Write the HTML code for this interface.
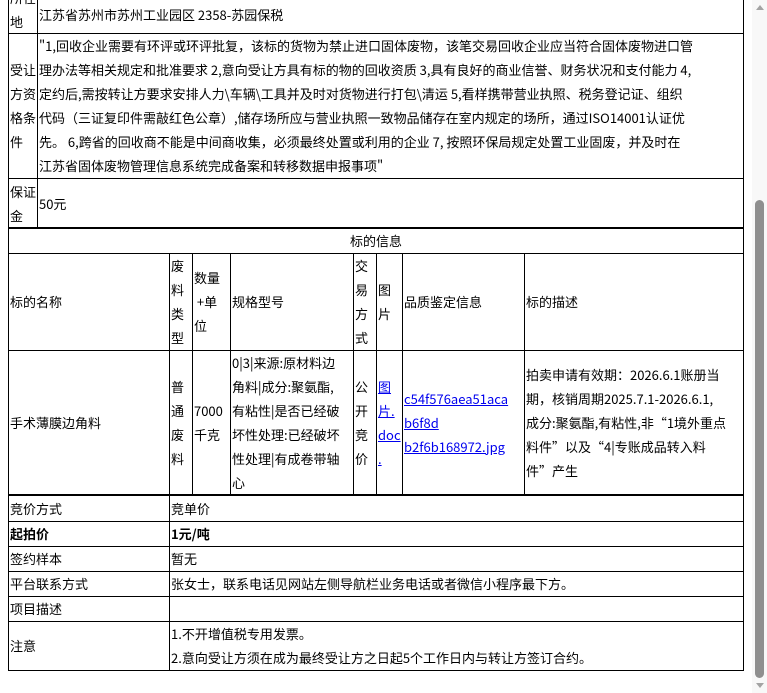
<!DOCTYPE html>
<html lang="zh-CN"><head><meta charset="utf-8">
<style>
*{margin:0;padding:0;box-sizing:border-box}
html,body{width:767px;height:693px;overflow:hidden;background:#fff}
body{position:relative;font-family:"Noto Sans CJK SC","Liberation Sans",sans-serif;font-size:13px;color:#000;line-height:24px}
.c{position:absolute;border:1px solid #000;display:flex;align-items:center;padding:0 1px;overflow:hidden}
.t{white-space:nowrap}
a{color:#0000ee;text-decoration:underline}
.thick{position:absolute;background:#000;height:2px}
</style></head><body>

<!-- top table -->
<div class="c" style="left:8px;top:-20px;width:30px;height:54px"><div class="t" style="margin-top:6px">所在<br>地</div></div>
<div class="c" style="left:37px;top:-20px;width:707px;height:54px"><div class="t" style="margin-top:16px">江苏省苏州市苏州工业园区 2358-苏园保税</div></div>

<div class="c" style="left:8px;top:33px;width:30px;height:146px"><div class="t">受让<br>方资<br>格条<br>件</div></div>
<div class="c" style="left:37px;top:33px;width:707px;height:146px"><div class="t">"1,回收企业需要有环评或环评批复，该标的货物为禁止进口固体废物，该笔交易回收企业应当符合固体废物进口管<br>理办法等相关规定和批准要求 2,意向受让方具有标的物的回收资质 3,具有良好的商业信誉、财务状况和支付能力 4,<br>定约后,需按转让方要求安排人力\车辆\工具并及时对货物进行打包\清运 5,看样携带营业执照、税务登记证、组织<br>代码（三证复印件需敲红色公章）,储存场所应与营业执照一致物品储存在室内规定的场所，通过ISO14001认证优<br>先。 6,跨省的回收商不能是中间商收集，必须最终处置或利用的企业 7, 按照环保局规定处置工业固废，并及时在<br>江苏省固体废物管理信息系统完成备案和转移数据申报事项"</div></div>

<div class="c" style="left:8px;top:178px;width:30px;height:51px"><div class="t">保证<br>金</div></div>
<div class="c" style="left:37px;top:178px;width:707px;height:51px"><div class="t">50元</div></div>
<div class="thick" style="left:8px;top:227px;width:736px"></div>

<div class="c" style="left:8px;top:228px;width:736px;height:26px;justify-content:center"><div class="t">标的信息</div></div>

<!-- header row -->
<div class="c" style="left:8px;top:253px;width:162px;height:98px"><div class="t">标的名称</div></div>
<div class="c" style="left:169px;top:253px;width:24px;height:98px"><div class="t">废<br>料<br>类<br>型</div></div>
<div class="c" style="left:192px;top:253px;width:39px;height:98px"><div class="t">数量<br>&nbsp;+单<br>位</div></div>
<div class="c" style="left:230px;top:253px;width:124px;height:98px"><div class="t">规格型号</div></div>
<div class="c" style="left:353px;top:253px;width:24px;height:98px"><div class="t">交<br>易<br>方<br>式</div></div>
<div class="c" style="left:376px;top:253px;width:27px;height:98px"><div class="t">图<br>片</div></div>
<div class="c" style="left:402px;top:253px;width:123px;height:98px"><div class="t">品质鉴定信息</div></div>
<div class="c" style="left:524px;top:253px;width:220px;height:98px"><div class="t">标的描述</div></div>

<!-- data row -->
<div class="c" style="left:8px;top:350px;width:162px;height:146px"><div class="t">手术薄膜边角料</div></div>
<div class="c" style="left:169px;top:350px;width:24px;height:146px"><div class="t">普<br>通<br>废<br>料</div></div>
<div class="c" style="left:192px;top:350px;width:39px;height:146px"><div class="t">7000<br>千克</div></div>
<div class="c" style="left:230px;top:350px;width:124px;height:146px"><div class="t">0|3|来源:原材料边<br>角料|成分:聚氨酯,<br>有粘性|是否已经破<br>坏性处理:已经破坏<br>性处理|有成卷带轴<br>心</div></div>
<div class="c" style="left:353px;top:350px;width:24px;height:146px"><div class="t">公<br>开<br>竞<br>价</div></div>
<div class="c" style="left:376px;top:350px;width:27px;height:146px"><div class="t"><a>图<br>片.<br>doc<br>.</a></div></div>
<div class="c" style="left:402px;top:350px;width:123px;height:146px"><div class="t"><a>c54f576aea51aca<br>b6f8d<br>b2f6b168972.jpg</a></div></div>
<div class="c" style="left:524px;top:350px;width:220px;height:146px"><div class="t">拍卖申请有效期：2026.6.1账册当<br>期，核销周期2025.7.1-2026.6.1,<br>成分:聚氨酯,有粘性,非“1境外重点<br>料件”以及“4|专账成品转入料<br>件”产生</div></div>
<div class="thick" style="left:8px;top:494px;width:736px"></div>

<!-- bottom table -->
<div class="c" style="left:8px;top:495px;width:162px;height:27px"><div class="t">竞价方式</div></div>
<div class="c" style="left:169px;top:495px;width:575px;height:27px"><div class="t">竞单价</div></div>
<div class="c" style="left:8px;top:521px;width:162px;height:26px"><div class="t"><b>起拍价</b></div></div>
<div class="c" style="left:169px;top:521px;width:575px;height:26px"><div class="t"><b>1元/吨</b></div></div>
<div class="c" style="left:8px;top:546px;width:162px;height:26px"><div class="t">签约样本</div></div>
<div class="c" style="left:169px;top:546px;width:575px;height:26px"><div class="t">暂无</div></div>
<div class="c" style="left:8px;top:571px;width:162px;height:26px"><div class="t">平台联系方式</div></div>
<div class="c" style="left:169px;top:571px;width:575px;height:26px"><div class="t">张女士，联系电话见网站左侧导航栏业务电话或者微信小程序最下方。</div></div>
<div class="c" style="left:8px;top:596px;width:162px;height:26px"><div class="t">项目描述</div></div>
<div class="c" style="left:169px;top:596px;width:575px;height:26px"></div>
<div class="c" style="left:8px;top:621px;width:162px;height:50px"><div class="t">注意</div></div>
<div class="c" style="left:169px;top:621px;width:575px;height:50px"><div class="t">1.不开增值税专用发票。<br>2.意向受让方须在成为最终受让方之日起5个工作日内与转让方签订合约。</div></div>

<!-- scrollbar -->
<div style="position:absolute;left:752px;top:0;width:15px;height:693px;background:#f8f8f8"></div>
<div style="position:absolute;left:755px;top:200px;width:9px;height:478px;background:#8f8f8f;border-radius:5px"></div>
<div style="position:absolute;left:756px;top:5px;width:0;height:0;border-left:4px solid transparent;border-right:4px solid transparent;border-bottom:5px solid #a3a3a3"></div>
<div style="position:absolute;left:756px;top:683px;width:0;height:0;border-left:4px solid transparent;border-right:4px solid transparent;border-top:5px solid #a3a3a3"></div>
</body></html>
